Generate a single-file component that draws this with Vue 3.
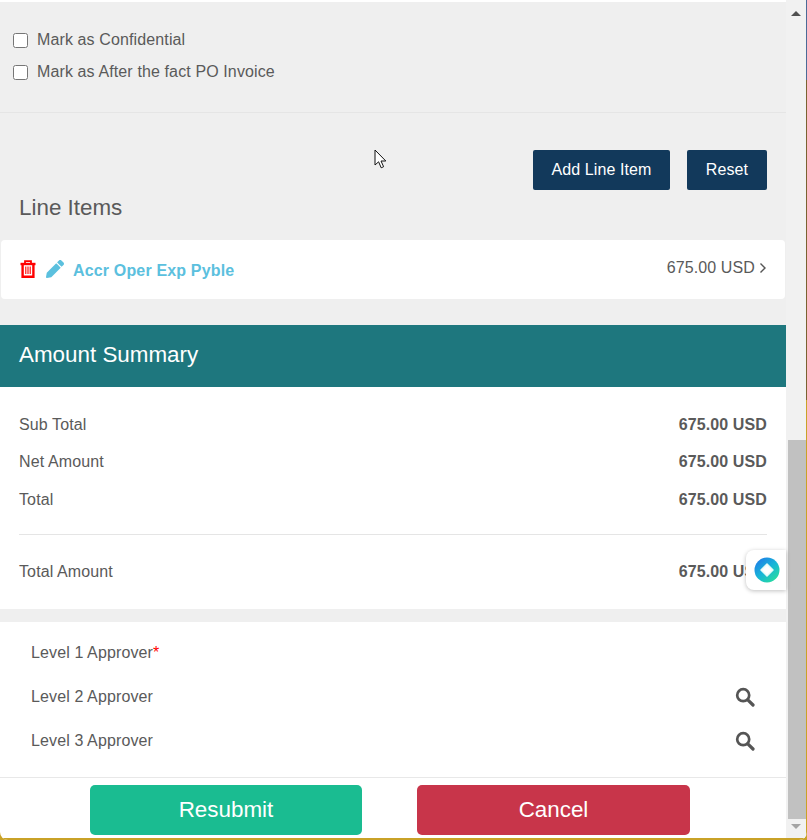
<script setup>
const checks = ['Mark as Confidential', 'Mark as After the fact PO Invoice']
const summary = ['Sub Total', 'Net Amount', 'Total']
const approvers = [
  { label: 'Level 1 Approver', required: true, search: false },
  { label: 'Level 2 Approver', required: false, search: true },
  { label: 'Level 3 Approver', required: false, search: true }
]
</script>

<template>
  <div class="window">
    <div class="main">
      <div class="scroll">
        <section class="flags">
          <label v-for="c in checks" :key="c" class="check">
            <input type="checkbox" />
            <span>{{ c }}</span>
          </label>
        </section>

        <section class="lines">
          <div class="actions">
            <button class="btn">Add Line Item</button>
            <button class="btn reset">Reset</button>
          </div>
          <h2 class="lines-title">Line Items</h2>
          <div class="card">
            <svg class="trash" viewBox="0 0 16 18" width="16" height="18" fill="none" stroke="#f00" stroke-width="2.4">
              <path d="M0.5 4H15.5" />
              <path d="M5 3.5V1.2H11V3.5" stroke-width="1.8" />
              <path d="M2.6 4V16.8H13.4V4" />
              <path d="M5.8 6.5V14M8 6.5V14M10.2 6.5V14" stroke-width="1.1" />
            </svg>
            <svg class="pencil" viewBox="0 0 512 512" width="18" height="18" fill="#5bc0de">
              <path d="M497.9 142.1l-46.1 46.1c-4.7 4.7-12.3 4.7-17 0l-111-111c-4.7-4.7-4.7-12.3 0-17l46.1-46.1c18.7-18.7 49.1-18.7 67.9 0l60.1 60.1c18.8 18.7 18.8 49.1 0 67.9zM284.2 99.8L21.6 362.4.4 483.9c-2.9 16.4 11.4 30.6 27.8 27.8l121.5-21.3 262.6-262.6c4.7-4.7 4.7-12.3 0-17l-111-111c-4.8-4.7-12.4-4.7-17.1 0z" />
            </svg>
            <a class="item-name">Accr Oper Exp Pyble</a>
            <span class="item-amount">675.00 USD</span>
            <svg class="chev" viewBox="0 0 8 12" width="8" height="12" fill="none" stroke="#555" stroke-width="1.4">
              <path d="M1.5 1.5L6 6L1.5 10.5" />
            </svg>
          </div>
        </section>

        <section class="summary">
          <h2 class="summary-head">Amount Summary</h2>
          <div class="summary-body">
            <div v-for="s in summary" :key="s" class="row">
              <span>{{ s }}</span>
              <b>675.00 USD</b>
            </div>
            <div class="row total">
              <span>Total Amount</span>
              <b>675.00 USD</b>
            </div>
          </div>
        </section>

        <section class="approvers">
          <div v-for="a in approvers" :key="a.label" class="approver">
            <span>{{ a.label }}<i v-if="a.required" class="req">*</i></span>
            <svg v-if="a.search" class="search" viewBox="0 0 20 20" width="20" height="20" fill="none" stroke="#555">
              <circle cx="8.2" cy="8.2" r="6" stroke-width="2.7" />
              <path d="M12.8 12.8L18 18" stroke-width="3.2" stroke-linecap="round" />
            </svg>
          </div>
        </section>
      </div>

      <footer class="footer">
        <button class="big green">Resubmit</button>
        <button class="big red">Cancel</button>
      </footer>
    </div>

    <aside class="scrollbar">
      <svg class="arrow up" viewBox="0 0 10 5" width="10" height="5"><path d="M5 0L10 5H0Z" fill="#505050" /></svg>
      <div class="thumb"></div>
      <svg class="arrow down" viewBox="0 0 10 5" width="10" height="5"><path d="M5 5L10 0H0Z" fill="#a3a3a3" /></svg>
    </aside>
    <div class="edge"></div>

    <div class="widget">
      <svg viewBox="0 0 26 26" width="26" height="26">
        <defs>
          <linearGradient id="orb" x1="0.1" y1="0.1" x2="0.8" y2="0.95">
            <stop offset="0" stop-color="#1f7fe6" />
            <stop offset="0.5" stop-color="#18b5d8" />
            <stop offset="1" stop-color="#27dba0" />
          </linearGradient>
        </defs>
        <circle cx="13" cy="13" r="12.5" fill="url(#orb)" />
        <path d="M13 7L19 13L13 19L7 13Z" fill="#fff" stroke="#e4fbf8" stroke-width="1.5" stroke-linejoin="round" />
      </svg>
    </div>

    <svg class="cursor" viewBox="0 0 13 20" width="13" height="20">
      <path d="M1 1V16L4.6 12.8L7.2 18.8L9.6 17.7L7 12H11.8Z" fill="#fff" stroke="#111" stroke-width="1" />
    </svg>
  </div>
</template>

<style>
html, body { margin: 0; background: #c9a227; }
</style>

<style scoped>
.window {
  position: relative;
  width: 807px;
  height: 840px;
  overflow: hidden;
  display: flex;
  font-family: "Liberation Sans", Arial, sans-serif;
  font-size: 16px;
  letter-spacing: 0.12px;
  color: #5a5a5a;
  background: #fff;
  border-radius: 0 0 8px 8px;
}
.main { width: 786px; height: 838px; display: flex; flex-direction: column; }
.scroll { flex: 1; min-height: 0; }

.flags {
  margin-top: 2px;
  height: 111px;
  box-sizing: border-box;
  padding-top: 28px;
  background: #efefef;
  border-bottom: 1px solid #e5e5e5;
  display: flex;
  flex-direction: column;
  gap: 12px;
}
.check { display: flex; align-items: center; height: 20px; padding-left: 13px; }
.check input { width: 15px; height: 15px; margin: 0 9px 0 0; accent-color: #555; }

.lines { background: #efefef; height: 212px; box-sizing: border-box; padding-top: 37px; }
.actions { display: flex; justify-content: flex-end; gap: 17px; padding-right: 19px; }
.btn {
  height: 40px;
  width: 137px;
  border: 0;
  border-radius: 2px;
  background: #12395b;
  color: #fff;
  font: 16px "Liberation Sans", Arial, sans-serif;
  letter-spacing: 0.1px;
}
.btn.reset { width: 80px; }
.lines-title { margin: 4px 0 0 19px; height: 28px; font-size: 22.4px; line-height: 28px; font-weight: 400; letter-spacing: 0; }
.card {
  margin: 18px 1px 0;
  height: 59px;
  border-radius: 4px;
  background: #fff;
  display: flex;
  align-items: center;
  padding: 0 18px 0 19px;
}
.trash { margin: -2px 10px 0 0; }
.pencil { margin: -2px 9px 0 0; }
.item-name { font-weight: 700; color: #5bc0de; flex: 1; margin-top: 3px; letter-spacing: 0.16px; }
.item-amount { margin-top: -4px; }
.chev { margin: -3px 0 0 4px; }

.summary { background: #fff; }
.summary-head {
  margin: 0;
  height: 62px;
  padding-left: 19px;
  background: #1e777e;
  color: #fff;
  font-size: 22.4px;
  line-height: 60px;
  font-weight: 400;
  letter-spacing: 0;
}
.summary-body { padding: 18.75px 19px 0; height: 222px; box-sizing: border-box; }
.row { display: flex; justify-content: space-between; height: 37.5px; line-height: 37.5px; }
.row b { font-weight: 700; }
.total {
  margin-top: 16px;
  padding-top: 18px;
  height: 37px;
  border-top: 1px solid #e5e5e5;
}

.approvers { border-top: 13px solid #efefef; padding: 9px 31px 0; background: #fff; }
.approver { display: flex; justify-content: space-between; align-items: center; height: 44px; }
.req { color: #f00; font-style: normal; }
.search { margin-top: 0; }

.footer {
  flex: none;
  height: 61px;
  box-sizing: border-box;
  border-top: 1px solid #e8e8e8;
  display: flex;
  justify-content: flex-start;
  align-items: flex-start;
  padding: 7px 0 0 90px;
  gap: 55px;
}
.big {
  height: 50px;
  width: 272px;
  border: 0;
  border-radius: 5px;
  color: #fff;
  font: 22.4px "Liberation Sans", Arial, sans-serif;
  letter-spacing: 0;
}
.green { background: #1abc91; }
.red { background: #c8354a; width: 273px; }

.scrollbar {
  width: 20px;
  height: 838px;
  background: #f1f1f1;
  display: flex;
  flex-direction: column;
  align-items: center;
}
.arrow { flex: none; }
.up { margin: 11px 0 0; }
.thumb { margin-top: 424px; width: 18px; margin-left: 2px; height: 379px; background: #c1c1c1; }
.down { margin-top: 5px; }
.edge { width: 1px; height: 840px; background: linear-gradient(#4b6a96 0 80px, #7a6230 80px 400px, #c9a227 400px); }
.window::after {
  content: "";
  position: absolute;
  left: 0;
  right: 0;
  bottom: 0;
  height: 2px;
  background: #c9a227;
}

.widget {
  position: absolute;
  left: 746px;
  top: 550px;
  width: 40px;
  height: 40px;
  background: #fff;
  border-radius: 8px 0 0 8px;
  box-shadow: 0 1px 4px rgba(0, 0, 0, 0.25);
  display: flex;
  align-items: center;
  justify-content: center;
}
.widget svg { margin-left: 2px; }
.cursor { position: absolute; left: 374px; top: 149px; }
</style>
